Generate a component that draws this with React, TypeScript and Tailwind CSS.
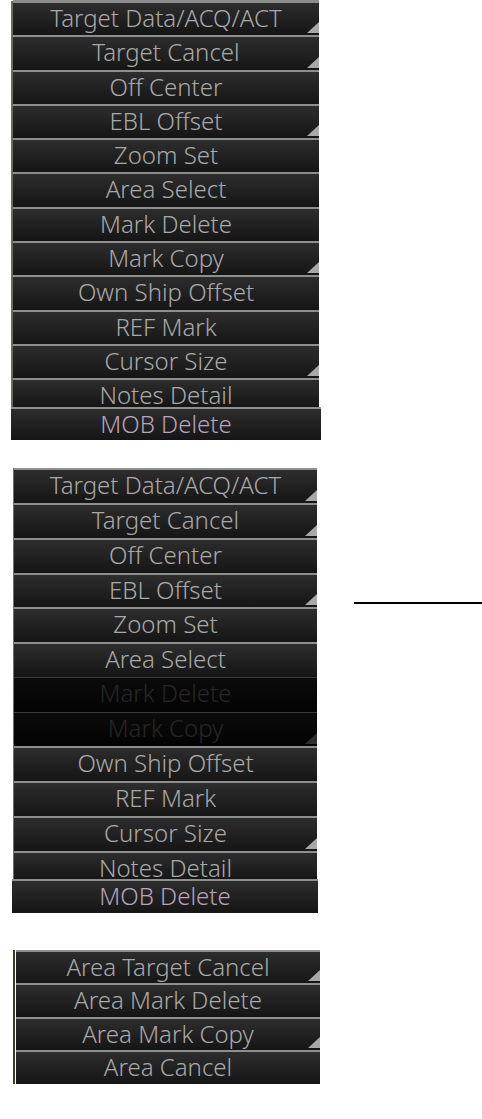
import React from 'react'

type Item = {
    label: string
    sub?: boolean
    disabled?: boolean
}

const MAIN_ITEMS: Item[] = [
    { label: 'Target Data/ACQ/ACT', sub: true },
    { label: 'Target Cancel', sub: true },
    { label: 'Off Center' },
    { label: 'EBL Offset', sub: true },
    { label: 'Zoom Set' },
    { label: 'Area Select' },
    { label: 'Mark Delete' },
    { label: 'Mark Copy', sub: true },
    { label: 'Own Ship Offset' },
    { label: 'REF Mark' },
    { label: 'Cursor Size', sub: true },
]

const AREA_ITEMS: Item[] = [
    { label: 'Area Target Cancel', sub: true },
    { label: 'Area Mark Delete' },
    { label: 'Area Mark Copy', sub: true },
    { label: 'Area Cancel' },
]

const Corner = ({ dim }: { dim?: boolean }) => (
    <svg className="absolute right-0 bottom-[2px]" width="12" height="11" viewBox="0 0 12 11">
        <polygon points="12,0 12,11 0,11" fill={dim ? '#2e2e2e' : '#a8a8a8'} />
    </svg>
)

type RowProps = {
    item: Item
    height: string
    mob?: boolean
}

const Row = ({ item, height, mob }: RowProps) => {
    const base = item.disabled
        ? 'border-t border-t-[#3a3a3a] bg-[linear-gradient(#0b0b0b,#030303)] text-[#272727]'
        : 'border-t-2 border-t-[#8e8e8e] bg-[linear-gradient(#2d2d2d,#151515)] text-[#a9a9a9]'

    return (
        <div
            className={`relative flex shrink-0 justify-center overflow-hidden leading-none ${base} ${height} ${
                mob ? 'text-[#b8a3bd]' : ''
            }`}
        >
            <span className="pt-[3px] text-[24px] font-light">{item.label}</span>
            {item.sub && <Corner dim={item.disabled} />}
        </div>
    )
}

export default function App() {
    const disabledSet = new Set(['Mark Delete', 'Mark Copy'])
    const secondItems = MAIN_ITEMS.map((i) => ({ ...i, disabled: disabledSet.has(i.label) }))

    return (
        <div
            className="h-[1119px] w-[482px] overflow-hidden bg-white"
            style={{ fontFamily: '"Noto Sans", "Open Sans", sans-serif' }}
        >
            {/* first menu */}
            <div className="ml-[11px] flex w-[310px] flex-col">
                <div className="relative ml-[2px] h-[1px] w-[306px] bg-[#8a8a8a]">
                    <div className="absolute left-[30px] top-0 h-[2px] w-[2px] bg-[#3fbf3f]" />
                    <div className="absolute left-[248px] top-0 h-[2px] w-[2px] bg-[#3fbf3f]" />
                </div>
                <div className="flex w-[308px] flex-col border-l-2 border-l-[#6b6a5c]">
                    {MAIN_ITEMS.map((item) => (
                        <Row key={item.label} item={item} height="h-[34.3px]" />
                    ))}
                    <Row item={{ label: 'Notes Detail' }} height="h-[29px]" />
                </div>
                <Row item={{ label: 'MOB Delete' }} height="h-[33px] w-[310px]" mob />
            </div>

            {/* second menu */}
            <div className="mt-[28px] flex items-start">
                <div className="ml-[12px] flex w-[306px] flex-col">
                    <div className="ml-[1px] flex w-[304px] flex-col border-l border-l-[#6f6f6f]">
                        {secondItems.map((item) => (
                            <Row key={item.label} item={item} height="h-[34.75px]" />
                        ))}
                        <Row item={{ label: 'Notes Detail' }} height="h-[28px]" />
                    </div>
                    <Row item={{ label: 'MOB Delete' }} height="h-[34px] w-[306px]" mob />
                </div>
                <div className="ml-[36px] mt-[134px] h-[2px] w-[128px] bg-black" />
            </div>

            {/* third menu */}
            <div className="ml-[13px] mt-[37px] flex w-[307px] border-l-2 border-l-[#3d3b2c] pl-px">
                <div className="flex w-[304px] flex-col">
                    {AREA_ITEMS.map((item) => (
                        <Row key={item.label} item={item} height="h-[33.5px]" />
                    ))}
                </div>
            </div>
        </div>
    )
}
